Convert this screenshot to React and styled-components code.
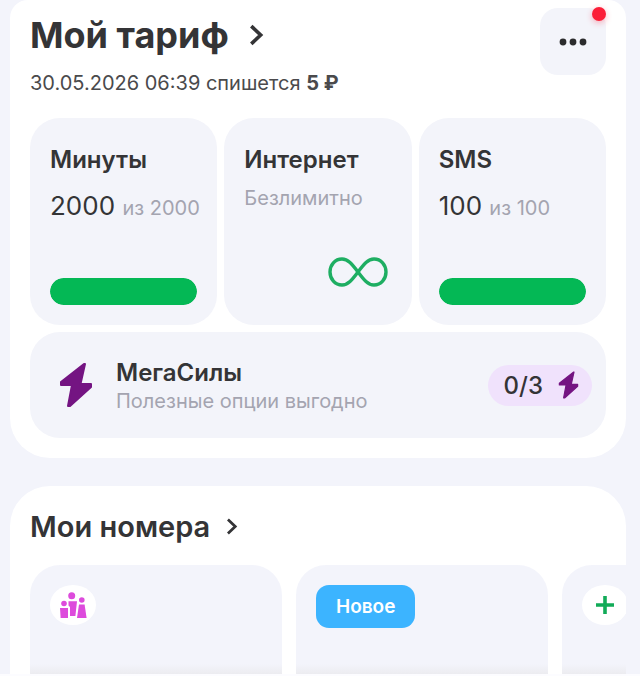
import React from 'react';
import styled, { createGlobalStyle } from 'styled-components';

const GlobalStyle = createGlobalStyle`
    * {
        box-sizing: border-box;
    }

    body {
        margin: 0;
        background-color: #f3f4fb;
        color: #343436;
        font-family: Inter, "Noto Sans", sans-serif;
    }

    h1, h2, h3, p {
        margin: 0;
    }

    button {
        font-family: inherit;
        color: inherit;
        border: none;
        padding: 0;
        cursor: pointer;
    }
`

const Page = styled.main`
    display: flex;
    flex-direction: column;
    gap: 28px;
    min-height: 100vh;
    padding: 0 14px 0 10px;
    border-bottom: 2px solid #fcfcff;
`

const Panel = styled.section`
    background-color: #fff;
    border-radius: 18px 18px 40px 40px;
    padding: 8px 20px 20px;
`

const NumbersPanel = styled.section`
    flex: 1;
    display: flex;
    flex-direction: column;
    gap: 20px;
    background-color: #fff;
    border-radius: 40px 40px 0 0;
    padding: 22px 0 0 20px;
    overflow: hidden;
`

const Header = styled.header`
    display: flex;
    justify-content: space-between;
    height: 110px;
`

const Heading = styled.div`
    display: flex;
    flex-direction: column;
    gap: 14px;
    padding-top: 5px;
`

const TitleLink = styled.a`
    display: flex;
    align-items: center;
    gap: ${({$small}) => $small ? "16px" : "20px"};
    color: inherit;
    text-decoration: none;
`

const Title = styled.h1`
    font-size: 36px;
    line-height: 44px;
    font-weight: 700;
`

const SubTitle = styled.h2`
    font-size: 29px;
    line-height: 37px;
    font-weight: 600;
`

const Charge = styled.p`
    font-size: 20px;
    line-height: 24px;
    color: #4a4a4c;
`

const MenuButton = styled.button`
    position: relative;
    display: flex;
    align-items: center;
    justify-content: center;
    width: 66px;
    height: 67px;
    border-radius: 18px;
    background-color: #f3f4fa;
`

const Badge = styled.span`
    position: absolute;
    top: -1px;
    right: 0;
    width: 14px;
    height: 14px;
    border-radius: 50%;
    background-color: #fb1f38;
    box-shadow: 0 2px 6px #fb1f3855;
`

const Tiles = styled.div`
    display: grid;
    grid-template-columns: repeat(3, minmax(0, 1fr));
    gap: 7px;
`

const Tile = styled.article`
    display: flex;
    flex-direction: column;
    height: 207px;
    padding: 26px 20px 20px;
    border-radius: 30px;
    background-color: #f3f4fa;
`

const TileTitle = styled.h3`
    font-size: 24px;
    line-height: 32px;
    font-weight: 600;
`

const Amount = styled.p`
    margin-top: 14px;
    font-size: 26px;
    line-height: 32px;
    white-space: nowrap;
`

const Total = styled.span`
    font-size: 20px;
    color: #a4a4b0;
`

const Note = styled.p`
    margin-top: 10px;
    font-size: 20px;
    line-height: 24px;
    color: #a4a4b0;
`

const Bar = styled.div`
    margin-top: auto;
    height: 27px;
    border-radius: 14px;
    background-color: #e2e4ea;
    overflow: hidden;
`

const BarFill = styled.div`
    height: 100%;
    border-radius: 14px;
    background-color: #04b855;
`

const InfinityIcon = styled.svg`
    align-self: flex-end;
    margin-top: auto;
    margin-bottom: 18px;
    margin-right: 4px;
`

const Power = styled.button`
    display: flex;
    align-items: center;
    width: 100%;
    height: 106px;
    margin-top: 7px;
    padding: 0 14px 0 28px;
    border-radius: 30px;
    background-color: #f3f4fa;
    text-align: left;
`

const PowerText = styled.span`
    flex: 1;
    display: flex;
    flex-direction: column;
    padding-left: 22px;
`

const PowerTitle = styled.span`
    font-size: 24px;
    line-height: 32px;
    font-weight: 600;
`

const PowerNote = styled.span`
    font-size: 20px;
    line-height: 24px;
    color: #a4a4b0;
`

const Counter = styled.span`
    display: flex;
    align-items: center;
    gap: 14px;
    height: 41px;
    padding: 0 12px 0 16px;
    border-radius: 21px;
    background-color: #f0e2fc;
    font-size: 24px;
    font-weight: 500;
`

const Numbers = styled.div`
    flex: 1;
    display: flex;
    gap: 14px;
    overflow: hidden;
`

const NumberCard = styled.article`
    flex: 0 0 252px;
    min-height: 108px;
    padding: 20px;
    border-radius: 30px 30px 0 0;
    background: linear-gradient(to top, #ececf0, #f3f4fb 10px);
`

const Round = styled.span`
    display: flex;
    align-items: center;
    justify-content: center;
    width: 46px;
    height: 40px;
    border-radius: 50%;
    background-color: #fff;
`

const AddButton = styled(Round).attrs({ as: "button" })``

const Tag = styled.span`
    display: inline-block;
    padding: 0 20px;
    border-radius: 13px;
    background-color: #3cb4ff;
    color: #fff;
    font-size: 19px;
    line-height: 43px;
    font-weight: 600;
`

const Chevron = ({ width, height }) => (
    <svg width={width} height={height} viewBox="0 0 14 21" fill="none" aria-hidden="true">
        <path d="M2 2L11 10.5L2 19" stroke="#343436" strokeWidth="3.4" />
    </svg>
)

const Bolt = ({ width, height }) => (
    <svg width={width} height={height} viewBox="0 0 34 46" aria-hidden="true">
        <path
            d="M25 2L2 20V23H13L9 44H11L32 25V22H21.5L26 2Z"
            fill="#741482"
            stroke="#741482"
            strokeWidth="2"
            strokeLinejoin="round"
        />
    </svg>
)

const Family = () => (
    <svg width="28" height="26" viewBox="0 0 28 26" fill="#dd4bdc" aria-hidden="true">
        <circle cx="5" cy="11.5" r="2.8" />
        <path d="M1 16H9V26H1.6Z" />
        <circle cx="12.7" cy="3.8" r="3.5" />
        <path d="M9.5 9.2H18L16.4 24H11V15L9.5 13.5Z" />
        <circle cx="22.8" cy="8" r="2.8" />
        <path d="M20 12.5H25.6L27.6 26H18Z" />
    </svg>
)

const Usage = ({ title, left, total }) => (
    <Tile>
        <TileTitle>{title}</TileTitle>
        <Amount>
            {left} <Total>из {total}</Total>
        </Amount>
        <Bar>
            <BarFill style={{ width: `${(left / total) * 100}%` }} />
        </Bar>
    </Tile>
)

const App = () => {
    return (
        <>
            <GlobalStyle />
            <Page>
                <Panel>
                    <Header>
                        <Heading>
                            <TitleLink href="#tariff">
                                <Title>Мой тариф</Title>
                                <Chevron width={15} height={22} />
                            </TitleLink>
                            <Charge>
                                30.05.2026 06:39 спишется <b>5 ₽</b>
                            </Charge>
                        </Heading>
                        <MenuButton aria-label="Меню">
                            <svg width="28" height="8" viewBox="0 0 28 8" fill="#2b2b2d" aria-hidden="true">
                                <circle cx="4" cy="4" r="3.4" />
                                <circle cx="14" cy="4" r="3.4" />
                                <circle cx="24" cy="4" r="3.4" />
                            </svg>
                            <Badge />
                        </MenuButton>
                    </Header>
                    <Tiles>
                        <Usage title="Минуты" left={2000} total={2000} />
                        <Tile>
                            <TileTitle>Интернет</TileTitle>
                            <Note>Безлимитно</Note>
                            <InfinityIcon width="60" height="30" viewBox="0 0 60 30" fill="none" aria-hidden="true">
                                <path
                                    d="M30 15C24 7 20 2 14 2C7 2 2 8 2 15C2 22 7 28 14 28C20 28 24 23 30 15C36 7 40 2 46 2C53 2 58 8 58 15C58 22 53 28 46 28C40 28 36 23 30 15Z"
                                    stroke="#1eae62"
                                    strokeWidth="3.4"
                                />
                            </InfinityIcon>
                        </Tile>
                        <Usage title="SMS" left={100} total={100} />
                    </Tiles>
                    <Power>
                        <Bolt width={36} height={46} />
                        <PowerText>
                            <PowerTitle>МегаСилы</PowerTitle>
                            <PowerNote>Полезные опции выгодно</PowerNote>
                        </PowerText>
                        <Counter>
                            0/3
                            <Bolt width={23} height={28} />
                        </Counter>
                    </Power>
                </Panel>
                <NumbersPanel>
                    <TitleLink href="#numbers" $small>
                        <SubTitle>Мои номера</SubTitle>
                        <Chevron width={12} height={17} />
                    </TitleLink>
                    <Numbers>
                        <NumberCard>
                            <Round>
                                <Family />
                            </Round>
                        </NumberCard>
                        <NumberCard>
                            <Tag>Новое</Tag>
                        </NumberCard>
                        <NumberCard>
                            <AddButton aria-label="Добавить номер">
                                <svg width="18" height="18" viewBox="0 0 18 18" aria-hidden="true">
                                    <path d="M9 0V18M0 9H18" stroke="#12ab58" strokeWidth="3.6" />
                                </svg>
                            </AddButton>
                        </NumberCard>
                    </Numbers>
                </NumbersPanel>
            </Page>
        </>
    );
}

export default App;
